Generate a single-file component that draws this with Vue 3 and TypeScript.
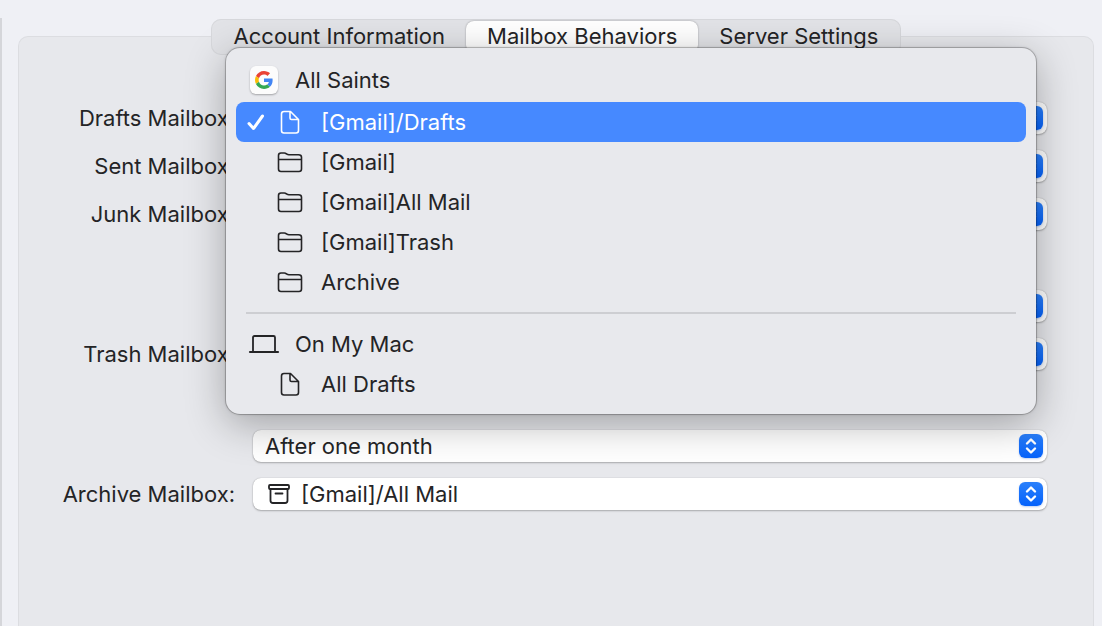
<script setup lang="ts">
import { ref } from 'vue'

interface Field {
  id: string
  label: string
  name: string
  value: string
  spaced?: boolean
  archive?: boolean
}

interface MenuEntry {
  label: string
  icon: 'file' | 'folder'
}

const tabs = ['Account Information', 'Mailbox Behaviors', 'Server Settings']
const activeTab = ref('Mailbox Behaviors')

const fields: Field[] = [
  { id: 'drafts', label: 'Drafts Mailbox:', name: 'Drafts Mailbox', value: '[Gmail]/Drafts' },
  { id: 'sent', label: 'Sent Mailbox:', name: 'Sent Mailbox', value: '' },
  { id: 'junk', label: 'Junk Mailbox:', name: 'Junk Mailbox', value: '' },
  { id: 'junk-erase', label: '', name: 'Erase junk messages', value: '', spaced: true },
  { id: 'trash', label: 'Trash Mailbox:', name: 'Trash Mailbox', value: '' },
  { id: 'trash-erase', label: '', name: 'Erase deleted messages', value: 'After one month', spaced: true },
  { id: 'archive', label: 'Archive Mailbox:', name: 'Archive Mailbox', value: '[Gmail]/All Mail', archive: true },
]

const accountEntries: MenuEntry[] = [
  { label: '[Gmail]/Drafts', icon: 'file' },
  { label: '[Gmail]', icon: 'folder' },
  { label: '[Gmail]All Mail', icon: 'folder' },
  { label: '[Gmail]Trash', icon: 'folder' },
  { label: 'Archive', icon: 'folder' },
]

const chosen = ref('[Gmail]/Drafts')
</script>

<template>
  <main class="window">
    <nav class="tabs" role="tablist" aria-label="Account settings">
      <button
        v-for="tab in tabs"
        :key="tab"
        type="button"
        role="tab"
        class="tab"
        :class="{ active: tab === activeTab }"
        :aria-selected="tab === activeTab"
        @click="activeTab = tab"
      >{{ tab }}</button>
    </nav>

    <section class="panel">
      <form class="form" @submit.prevent>
        <div v-for="f in fields" :key="f.id" class="row" :class="{ spaced: f.spaced }">
          <label class="label" :for="f.id">{{ f.label }}</label>
          <div class="control">
            <select :id="f.id" class="select" :class="{ 'with-icon': f.archive }" :aria-label="f.name">
              <option>{{ f.value }}</option>
            </select>
            <svg v-if="f.archive" class="archive-icon" viewBox="0 0 24 22" aria-hidden="true">
              <rect x="2" y="2" width="20" height="4" rx="1" />
              <path d="M3.500 6v11.500q0 2.500 2.500 2.500h12q2.500 0 2.500-2.500V6M8.500 10.500h7" />
            </svg>
            <span class="stepper" aria-hidden="true">
              <svg viewBox="0 0 24 24">
                <path d="M8 9.500l4-4 4 4M8 14.500l4 4 4-4" />
              </svg>
            </span>

            <div v-if="f.id === 'drafts'" class="menu" role="menu" aria-label="Drafts Mailbox">
              <div class="heading top">
                <span class="google">
                  <svg viewBox="0 0 48 48" aria-hidden="true">
                    <path fill="#ea4335" d="M24 9.500c3.540 0 6.710 1.220 9.210 3.600l6.850-6.850C35.900 2.380 30.470 0 24 0 14.620 0 6.510 5.380 2.560 13.220l7.980 6.190C12.430 13.720 17.740 9.500 24 9.500z" />
                    <path fill="#4285f4" d="M46.980 24.550c0-1.570-.15-3.090-.38-4.550H24v9.020h12.940c-.58 2.960-2.260 5.480-4.780 7.180l7.730 6c4.510-4.180 7.090-10.360 7.090-17.650z" />
                    <path fill="#fbbc05" d="M10.530 28.590A14.500 14.500 0 0 1 9.770 24c0-1.600.27-3.140.76-4.590l-7.980-6.190A23.900 23.900 0 0 0 0 24c0 3.880.92 7.540 2.560 10.780z" />
                    <path fill="#34a853" d="M24 48c6.480 0 11.930-2.130 15.890-5.810l-7.730-6c-2.150 1.450-4.920 2.300-8.160 2.300-6.260 0-11.570-4.220-13.470-9.910l-7.980 6.190C6.510 42.620 14.620 48 24 48z" />
                  </svg>
                </span>
                All Saints
              </div>
              <button
                v-for="e in accountEntries"
                :key="e.label"
                type="button"
                role="menuitemradio"
                class="entry"
                :class="{ chosen: e.label === chosen }"
                :aria-checked="e.label === chosen"
                @click="chosen = e.label"
              >
                <svg class="check" viewBox="0 0 20 20" aria-hidden="true">
                  <path v-if="e.label === chosen" d="M3 11.500l4.500 5L16.500 4" />
                </svg>
                <svg class="glyph" viewBox="0 0 28 28" aria-hidden="true">
                  <path v-if="e.icon === 'file'" d="M8 3.500h6.500l8 8v11q0 2.500-2.500 2.500H8q-2.500 0-2.500-2.500V6q0-2.500 2.500-2.500zM14 3.500v6.500q0 1.500 1.500 1.500h7" />
                  <path v-else d="M2.500 21V7.500q0-2.500 2.500-2.500h3.200q1.300 0 2.200.8l.5.300q.8.600 2 .6h9.600q3 0 3 2.500V21q0 2.500-2.500 2.500H5q-2.500 0-2.500-2.500zM2.500 11.500h23" />
                </svg>
                {{ e.label }}
              </button>
              <hr class="divider" />
              <div class="heading">
                <svg class="laptop" viewBox="0 0 32 28" aria-hidden="true">
                  <path d="M5 21.500V7.500q0-1.500 1.500-1.500h19q1.500 0 1.500 1.500v14" />
                  <path class="base" d="M2 22h28" />
                </svg>
                On My Mac
              </div>
              <button type="button" role="menuitemradio" class="entry" aria-checked="false">
                <svg class="check" viewBox="0 0 20 20" aria-hidden="true" />
                <svg class="glyph" viewBox="0 0 28 28" aria-hidden="true">
                  <path d="M8 3.500h6.500l8 8v11q0 2.500-2.500 2.500H8q-2.500 0-2.500-2.500V6q0-2.500 2.500-2.500zM14 3.500v6.500q0 1.500 1.500 1.500h7" />
                </svg>
                All Drafts
              </button>
            </div>
          </div>
        </div>
      </form>
    </section>
  </main>
</template>

<style>
body {
  background: #eff0f5;
}
</style>

<style scoped>
.window {
  box-sizing: border-box;
  min-height: 100vh;
  display: flex;
  flex-direction: column;
  padding: 19px 8px 0 18px;
  background: linear-gradient(#d5d6da, #d5d6da) 0 18px / 2px 100% no-repeat #eff0f5;
  font-family: Inter, "Liberation Sans", sans-serif;
  font-size: 22px;
  line-height: 32px;
  color: #242426;
  overflow: hidden;
}

.tabs {
  position: relative;
  align-self: center;
  display: flex;
  box-sizing: border-box;
  height: 36px;
  padding: 2px;
  border-radius: 10px;
  background: #e2e3e7;
  box-shadow: inset 0 0 0 1px #d7d8dc;
}

.tab {
  height: 32px;
  padding: 0 21px 2px;
  border: 0;
  border-radius: 8px;
  background: transparent;
  font: inherit;
  line-height: 30px;
  color: inherit;
  white-space: nowrap;
}

.tab.active {
  background: #fff;
  box-shadow: 0 0 2px rgba(0, 0, 0, 0.35);
}

.panel {
  flex: 1;
  margin-top: -19px;
  padding: 65px 46px 0 0;
  border: 1px solid #dcdde1;
  border-bottom: 0;
  border-radius: 10px 10px 0 0;
  background: #e7e8ec;
}

.form {
  display: flex;
  flex-direction: column;
  gap: 16px;
}

.row {
  display: grid;
  grid-template-columns: 216px minmax(0, 1fr);
  column-gap: 18px;
  height: 32px;
}

.row.spaced {
  margin-top: 44px;
}

.label {
  text-align: right;
  white-space: nowrap;
}

.control {
  position: relative;
}

.select {
  appearance: none;
  display: block;
  width: 100%;
  height: 32px;
  padding: 0 40px 0 12px;
  border: 0;
  border-radius: 8px;
  background: #fff;
  box-shadow: 0 0 1px rgba(0, 0, 0, 0.3), 0 1px 2px rgba(0, 0, 0, 0.25);
  font: inherit;
  color: inherit;
}

.select.with-icon {
  padding-left: 48px;
}

.archive-icon {
  position: absolute;
  left: 14px;
  top: 5px;
  width: 24px;
  height: 22px;
  fill: none;
  stroke: #242426;
  stroke-width: 1.8;
  stroke-linecap: round;
  pointer-events: none;
}

.stepper {
  position: absolute;
  top: 4px;
  right: 4px;
  width: 24px;
  height: 24px;
  border-radius: 6px;
  background: linear-gradient(#2b80fb, #0562fb);
  box-shadow: 0 1px 2px rgba(0, 70, 200, 0.25);
  pointer-events: none;
}

.stepper svg {
  display: block;
  fill: none;
  stroke: #fff;
  stroke-width: 2.4;
  stroke-linecap: round;
  stroke-linejoin: round;
}

.menu {
  position: absolute;
  z-index: 2;
  top: -54px;
  left: -27px;
  right: 11px;
  padding: 12px 10px 10px;
  border-radius: 14px;
  background: #e8e9ed;
  box-shadow: 0 0 0 1px rgba(0, 0, 0, 0.18), 0 0 3px rgba(0, 0, 0, 0.25), 0 10px 40px rgba(0, 0, 0, 0.3);
}

.heading {
  display: flex;
  align-items: center;
  gap: 15px;
  height: 40px;
  padding-left: 12px;
}

.heading.top {
  margin-bottom: 2px;
}

.google {
  display: grid;
  place-items: center;
  width: 28px;
  height: 28px;
  margin: 0 2px;
  border-radius: 6px;
  background: #fcfcfc;
  box-shadow: 0 1px 2px rgba(0, 0, 0, 0.3);
}

.google svg {
  width: 18px;
  height: 18px;
}

.laptop {
  width: 32px;
  height: 28px;
  fill: none;
  stroke: #242426;
  stroke-width: 1.8;
}

.laptop .base {
  stroke-width: 2.2;
  stroke-linecap: round;
}

.entry {
  display: flex;
  align-items: center;
  width: 100%;
  height: 40px;
  padding: 0 10px;
  border: 0;
  border-radius: 8px;
  background: transparent;
  font: inherit;
  color: inherit;
  text-align: left;
}

.entry.chosen {
  background: #4689ff;
  color: #fff;
}

.check,
.glyph {
  flex: none;
  fill: none;
  stroke: currentColor;
  stroke-linecap: round;
  stroke-linejoin: round;
}

.check {
  width: 20px;
  height: 20px;
  margin-right: 10px;
  stroke-width: 3;
}

.glyph {
  width: 28px;
  height: 28px;
  margin-right: 17px;
  stroke-width: 1.6;
}

.divider {
  height: 2px;
  margin: 10px;
  border: 0;
  background: #cdced2;
}
</style>
